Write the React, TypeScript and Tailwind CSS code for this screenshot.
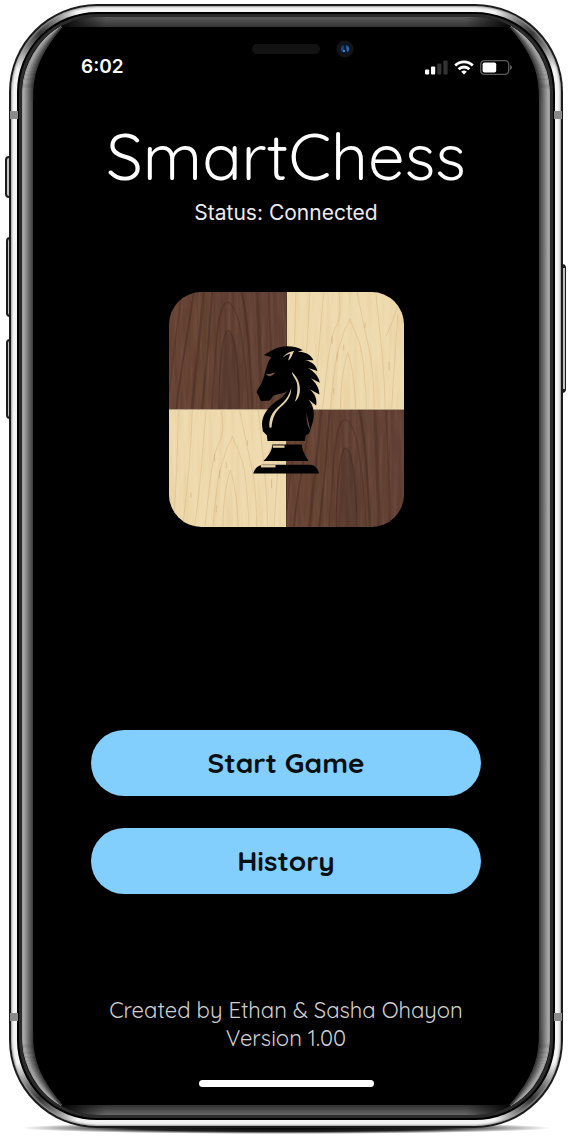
import React from "react";

const bevelShades = ["#949494", "#aaaaaa", "#a2a2a2", "#979797", "#8b8b8b", "#7e7e7e", "#717171", "#656565", "#585858", "#4b4b4b", "#3c3c3c"];

function CornerGlare({ className }: { className: string }) {
  return (
    <svg aria-hidden="true" viewBox="0 0 60 84" className={`pointer-events-none absolute h-[84px] w-[60px] ${className}`} fill="none">
      {bevelShades.map((shade, i) => {
        const t = i / 10;
        const x = 0.5 + i;
        return (
          <path
            key={shade}
            d={`M${x} 84 V74 C${x + 1} ${50 + 2 * t} ${16 + 3 * t} ${22 + 13 * t} 39 ${9.5 + t}`}
            stroke={shade}
            strokeWidth="1.4"
          />
        );
      })}
    </svg>
  );
}

function SideKey({ className }: { className: string }) {
  return <span aria-hidden="true" className={`absolute border-[#1c1c1c] bg-[#c4c4c4] ${className}`} />;
}

function AntennaBand({ className }: { className: string }) {
  return <span aria-hidden="true" className={`absolute h-2 w-2 bg-[#8a8a8a] ${className}`} />;
}

function SignalIcon() {
  return (
    <svg viewBox="0 0 23 15" className="h-[15px] w-[23px]" role="img" aria-label="Signal">
      <rect x="0" y="9.5" width="4.2" height="5" rx="1" fill="#fff" />
      <rect x="6" y="6.5" width="4.2" height="8" rx="1" fill="#fff" />
      <rect x="12.2" y="3.5" width="4.2" height="11" rx="1" fill="#333" />
      <rect x="18.4" y="0.5" width="4.2" height="14" rx="1" fill="#333" />
    </svg>
  );
}

function WifiIcon() {
  return (
    <svg viewBox="0 0 20 15" className="h-[15px] w-5" role="img" aria-label="Wi-Fi" fill="none" stroke="#fff" strokeWidth="2.8">
      <path d="M1.2 5.6 C6.2 0.7 13.8 0.7 18.8 5.6" />
      <path d="M4.6 9.3 C7.7 6.2 12.3 6.2 15.4 9.3" />
      <path d="M10 14.6 L7.2 11.8 C8.8 10.2 11.2 10.2 12.8 11.8 Z" fill="#fff" stroke="none" />
    </svg>
  );
}

function BatteryIcon() {
  return (
    <svg viewBox="0 0 33 15" className="h-[15px] w-[33px]" role="img" aria-label="Battery">
      <rect x="0.7" y="0.7" width="28" height="13.6" rx="3.6" fill="none" stroke="#5c5c5c" strokeWidth="1.3" />
      <rect x="2.6" y="2.5" width="13.6" height="10" rx="1.8" fill="#fff" />
      <path d="M30 5 C32.6 5.8 32.6 9.2 30 10 Z" fill="#5c5c5c" />
    </svg>
  );
}

function BoardLogo() {
  return (
    <svg viewBox="22 22 706 706" className="h-[235px] w-[235px]" role="img" aria-label="Chess knight on a board">
      <defs>
        <clipPath id="board-shape">
          <rect x="22" y="22" width="706" height="706" rx="98" />
        </clipPath>
        <clipPath id="tile-shape">
          <rect width="353" height="353" />
        </clipPath>
        <filter id="walnut-grain" x="0" y="0" width="100%" height="100%">
          <feTurbulence type="fractalNoise" baseFrequency="0.09 0.006" numOctaves="3" seed="7" />
          <feColorMatrix values="0 0 0 0 0.2  0 0 0 0 0.1  0 0 0 0 0.07  1 0 0 0 -0.36" />
        </filter>
        <filter id="maple-grain" x="0" y="0" width="100%" height="100%">
          <feTurbulence type="fractalNoise" baseFrequency="0.07 0.005" numOctaves="3" seed="3" />
          <feColorMatrix values="0 0 0 0 0.78  0 0 0 0 0.6  0 0 0 0 0.32  1.2 0 0 0 -0.48" />
        </filter>
        <linearGradient id="walnut">
          <stop offset="0" stopColor="#633f31" />
          <stop offset="0.3" stopColor="#62402f" />
          <stop offset="0.52" stopColor="#5b3b2f" />
          <stop offset="0.75" stopColor="#604032" />
          <stop offset="1" stopColor="#5f3d33" />
        </linearGradient>
        <g id="walnut-tile" clipPath="url(#tile-shape)">
          <rect width="353" height="353" fill="url(#walnut)" />
          <rect width="353" height="353" filter="url(#walnut-grain)" />
          <g fill="none" stroke="#3e241c" strokeLinecap="round" opacity="0.8">
            <path d="M150 353 C150 230 160 120 177 116 C198 116 210 230 212 353" strokeWidth="4" opacity="0.5" />
            <path d="M128 353 C138 220 142 80 162 44 C176 10 202 40 216 120 C228 200 236 270 238 353" strokeWidth="4" opacity="0.4" />
            <path d="M98 353 C116 210 122 90 130 0" strokeWidth="6" opacity="0.5" />
            <path d="M70 353 C78 230 98 100 104 0" strokeWidth="8" opacity="0.45" />
            <path d="M22 353 C34 230 62 100 74 0" strokeWidth="5" opacity="0.5" />
            <path d="M2 300 C12 180 28 80 40 0" strokeWidth="4" opacity="0.4" />
            <path d="M218 0 C238 90 246 230 250 353" strokeWidth="6" opacity="0.5" />
            <path d="M264 0 C268 100 278 240 276 353" strokeWidth="10" opacity="0.4" />
            <path d="M300 0 C302 120 312 240 310 353" strokeWidth="5" opacity="0.4" />
          </g>
          <path d="M150 353 C150 230 160 120 177 116 C198 116 210 230 212 353 Z" fill="#4c3028" opacity="0.25" />
        </g>
        <g id="maple-tile" clipPath="url(#tile-shape)">
          <rect width="353" height="353" fill="#efdbb0" />
          <rect width="353" height="353" filter="url(#maple-grain)" />
          <g fill="none" stroke="#cfae76" strokeWidth="2.5" strokeLinecap="round" opacity="0.5">
            <path d="M132 353 C140 250 152 170 166 144 C176 96 186 104 190 80 C204 120 222 140 230 210 C236 270 240 310 240 353" />
            <path d="M162 353 C162 280 172 220 184 182 C196 214 206 280 208 353" />
            <path d="M108 353 C122 230 128 140 150 102 C166 70 160 40 158 0" />
            <path d="M212 0 C224 60 234 110 248 170 C262 240 262 300 264 353" />
            <path d="M76 353 C94 250 100 120 112 0" />
            <path d="M40 353 C58 230 66 110 70 0" />
            <path d="M12 353 C22 240 26 120 28 0" />
            <path d="M268 0 C278 100 296 240 296 353" />
            <path d="M300 130 C318 90 336 50 340 0" />
            <path d="M316 353 C320 260 330 150 334 70" />
          </g>
          <path d="M137 134 v22 M172 158 v18 M152 182 v24 M308 210 v26 M236 92 v16 M142 288 v20 M66 250 v14" stroke="#c69a68" strokeWidth="3" opacity="0.45" />
        </g>
      </defs>
      <g clipPath="url(#board-shape)">
        <use href="#walnut-tile" x="22" y="22" />
        <use href="#maple-tile" x="375" y="22" />
        <use href="#maple-tile" x="22" y="375" />
        <use href="#walnut-tile" x="375" y="375" />
        <path d="M22 375 H728" stroke="#dcc9a6" strokeWidth="2" />
        <path d="M375 22 V728" stroke="#3a261c" strokeWidth="2" opacity="0.5" />
      </g>
      <g fill="#000">
        <path
          d="M307 212 C330 196 350 186 378 185 C396 185 412 189 424 197 L408 201 C432 202 448 210 456 227 L430 226 C450 230 464 242 468 259 L440 250 C458 261 473 276 475 295 L448 281 C464 296 473 310 474 330 L446 315 C460 328 468 344 464 363 L441 345 C456 362 459 384 456 402 C454 418 448 428 446 438 L443 447 L433 452 L430 470 L318 470 L316 452 L304 440 L302 426 C299 404 310 382 328 364 C346 346 362 344 378 318 C366 330 350 326 336 334 C329 340 328 350 318 349 C310 348 301 353 297 348 L292 335 L285 323 C286 316 294 308 300 296 C308 280 310 262 316 246 C319 236 322 226 330 219 C322 215 314 213 307 212 Z"
        />
        <path d="M333 480 H421 C423 503 433 515 441 530 H306 C319 515 330 503 333 480 Z" />
        <path d="M275 567 C280 550 292 541 306 541 H448 C462 543 470 555 473 567 Z" />
      </g>
      <g fill="#e6d3aa">
        <path d="M389 311 C390 334 376 353 356 369 C340 384 332 404 330 429 L324 430 C321 403 331 384 348 369 C368 352 382 337 389 311 Z" />
        <path d="M391 262 C411 279 417 304 415 322 C413 336 408 346 400 352 C407 336 410 312 406 295 C402 281 393 274 391 262 Z" />
        <path d="M363 219 C374 206 384 201 398 199 C392 209 390 221 380 228 C383 217 385 212 386 207 C378 210 372 213 363 219 Z" />
        <rect x="334" y="483" width="35" height="7" />
        <rect x="298" y="542" width="44" height="7" />
      </g>
      <path d="M313 267 C324 270 332 266 341 264 C335 275 320 280 313 267 Z" fill="#765344" />
      <path d="M436 384 C437 404 444 420 446 437 C437 424 434 404 436 384 Z" fill="#6b4a3a" />
      <path d="M318 473 H375 M306 533 H375" stroke="#e6d3aa" strokeWidth="2" />
    </svg>
  );
}

function MenuButton({ children }: { children: React.ReactNode }) {
  return (
    <button type="button" className="h-[66px] w-full rounded-full bg-[#82cefc] text-[28px] leading-none font-bold text-[#0a0f12]">
      {children}
    </button>
  );
}

export default function App() {
  return (
    <div className="flex min-h-screen flex-col bg-white pt-1 pr-[11px] pb-2 pl-[9px] font-['Quicksand','Lato',sans-serif]">
      <div className="relative flex flex-1 flex-col">
        <span aria-hidden="true" className="absolute inset-x-3 -bottom-1.5 h-3 rounded-[50%] bg-[radial-gradient(closest-side,#000_0%,#222_60%,transparent_100%)]" />
        <SideKey className="top-[152px] -left-1 h-[42px] w-[6px] rounded-l border-2" />
        <SideKey className="top-[233px] -left-[3px] h-20 w-[6px] rounded-l border-2" />
        <SideKey className="top-[335px] -left-[3px] h-20 w-[6px] rounded-l border-2" />
        <SideKey className="top-[260px] -right-[3px] h-[129px] w-[6px] rounded-r border-y-4 border-r" />

        <div className="relative flex flex-1 flex-col rounded-[88px] bg-[#1b1b1b] p-[2px]">
          <div className="flex flex-1 flex-col rounded-[86px] bg-[#f4f4f4] bg-[radial-gradient(circle_at_30px_28px,#333_0,#777_18px,transparent_42px),radial-gradient(circle_at_calc(100%-30px)_28px,#333_0,#777_18px,transparent_42px),radial-gradient(circle_at_30px_calc(100%-28px),#333_0,#777_18px,transparent_42px),radial-gradient(circle_at_calc(100%-30px)_calc(100%-28px),#333_0,#777_18px,transparent_42px)] p-[6px] shadow-[inset_0_0_2px_1px_#999]">
            <div className="flex flex-1 flex-col rounded-[80px] border-2 border-black bg-[#2b2b2b] p-[3px]">
              <main className="relative flex flex-1 flex-col overflow-hidden rounded-[75px] bg-black text-white">
                <span aria-hidden="true" className="absolute inset-x-[34px] top-0 h-[10px] bg-linear-to-b from-[#5a5a5a] to-[#353535] mask-x-from-[calc(100%-50px)] mask-x-to-100%" />
                <span aria-hidden="true" className="absolute inset-x-[34px] bottom-0 h-[10px] bg-linear-to-t from-[#686868] to-[#303030] mask-x-from-[calc(100%-50px)] mask-x-to-100%" />
                <span aria-hidden="true" className="absolute inset-y-[84px] left-0 w-[11px] bg-linear-to-r from-[#949494] via-[#aaaaaa] via-15% to-[#3c3c3c]" />
                <span aria-hidden="true" className="absolute inset-y-[84px] right-0 w-[11px] bg-linear-to-l from-[#949494] via-[#aaaaaa] via-15% to-[#3c3c3c]" />
                <CornerGlare className="top-0 left-0" />
                <CornerGlare className="top-0 right-0 -scale-x-100" />
                <CornerGlare className="bottom-0 left-0 -scale-y-100" />
                <CornerGlare className="right-0 bottom-0 -scale-100" />

                <span aria-hidden="true" className="absolute top-[27px] left-1/2 h-[10px] w-[68px] -translate-x-1/2 rounded-full bg-[#131313]" />
                <svg aria-hidden="true" viewBox="0 0 18 18" className="absolute top-[23px] left-1/2 ml-[50px] h-[18px] w-[18px]">
                  <circle cx="9" cy="9" r="8.5" fill="#131416" />
                  <circle cx="9" cy="9" r="5" fill="#081831" />
                  <path d="M7.8 5.2 C3.8 6.2 3.8 11.8 7.8 12.4 Z" fill="#16477e" />
                  <path d="M10 5.2 C14 6.2 14 11 11 12 Z" fill="#2a6cab" />
                  <circle cx="8" cy="11" r="1" fill="#4a9be0" />
                </svg>

                <div className="flex items-center justify-between pt-[38px] pr-[37px] pl-[59px]">
                  <time className="font-['Inter',sans-serif] text-[19px] leading-6 font-semibold">6:02</time>
                  <div className="flex items-center gap-[6px]">
                    <SignalIcon />
                    <WifiIcon />
                    <BatteryIcon />
                  </div>
                </div>

                <header className="mt-[45px] text-center">
                  <h1 className="text-[65px] leading-[64px] font-normal">SmartChess</h1>
                  <p className="mt-[11px] font-['Inter',sans-serif] text-[21px] leading-7 text-[#ececec]">Status: Connected</p>
                </header>

                <div className="mt-[65px] flex justify-center">
                  <BoardLogo />
                </div>

                <nav aria-label="Main" className="mt-auto flex flex-col gap-8 px-[69px] pt-10">
                  <MenuButton>Start Game</MenuButton>
                  <MenuButton>History</MenuButton>
                </nav>

                <footer className="mt-[102px] flex flex-col items-center pb-[28px] text-center text-[22px] leading-7 font-normal text-[#d0d0d0]">
                  <p>Created by Ethan &amp; Sasha Ohayon</p>
                  <p>Version 1.00</p>
                  <span aria-hidden="true" className="mt-7 h-[7px] w-[175px] rounded-full bg-white" />
                </footer>
              </main>
            </div>
          </div>
          <AntennaBand className="top-[107px] left-px" />
          <AntennaBand className="top-[107px] right-px" />
          <AntennaBand className="bottom-[107px] left-px" />
          <AntennaBand className="right-px bottom-[107px]" />
        </div>
      </div>
    </div>
  );
}
